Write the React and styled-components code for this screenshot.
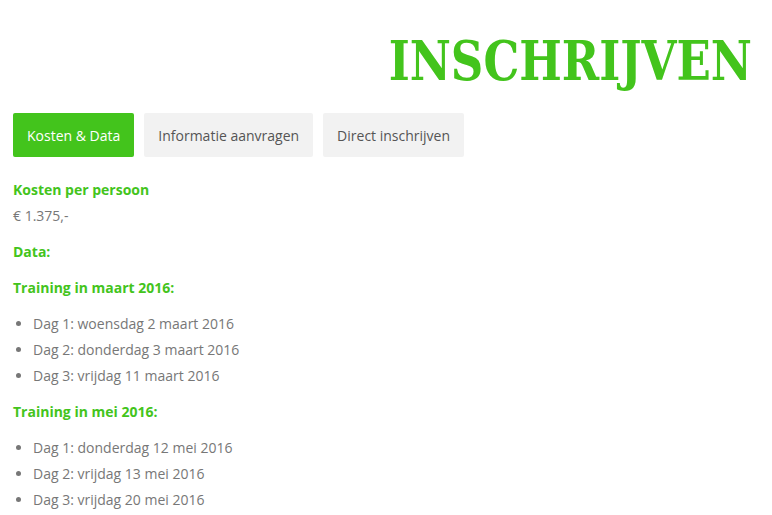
import React from 'react';
import styled, { createGlobalStyle } from 'styled-components';

const green = '#43c41c';

const GlobalStyle = createGlobalStyle`
  body {
    margin: 0;
    background: #fff;
    font-family: 'Open Sans', 'Liberation Sans', sans-serif;
  }
`;

const Page = styled('div')`
  padding: 0 20px 0 13px;
`;

const Title = styled('h1')`
  margin: 0;
  padding-top: 31px;
  text-align: right;
  font-family: 'DejaVu Serif', serif;
  font-stretch: condensed;
  font-weight: 700;
  font-size: 55px;
  line-height: 60px;
  color: ${green};
  transform: scaleX(0.91);
  transform-origin: right center;
`;

const Tabs = styled('div')`
  display: flex;
  gap: 10px;
  margin-top: 22px;
`;

const Tab = styled('button')`
  height: 44px;
  padding: 0 14px;
  border: none;
  border-radius: 2px;
  font-family: 'Open Sans', sans-serif;
  font-size: 14px;
  color: ${({ $active }) => ($active ? '#fff' : '#555')};
  background: ${({ $active }) => ($active ? green : '#f2f2f2')};
  cursor: pointer;
`;

const Content = styled('div')`
  margin-top: 20px;
  font-size: 14px;
  line-height: 26px;
  color: #777;
`;

const Para = styled('p')`
  margin: 0 0 10px;
`;

const Strong = styled('strong')`
  color: ${green};
  font-weight: 700;
`;

const List = styled('ul')`
  margin: 0 0 10px;
  padding-left: 20px;
`;

const trainings = [
  {
    title: 'Training in maart 2016:',
    days: ['Dag 1: woensdag 2 maart 2016', 'Dag 2: donderdag 3 maart 2016', 'Dag 3: vrijdag 11 maart 2016'],
  },
  {
    title: 'Training in mei 2016:',
    days: ['Dag 1: donderdag 12 mei 2016', 'Dag 2: vrijdag 13 mei 2016', 'Dag 3: vrijdag 20 mei 2016'],
  },
];

const App = () => {
  return (
    <Page>
      <GlobalStyle />
      <Title>INSCHRIJVEN</Title>
      <Tabs>
        <Tab $active>Kosten &amp; Data</Tab>
        <Tab>Informatie aanvragen</Tab>
        <Tab>Direct inschrijven</Tab>
      </Tabs>
      <Content>
        <Para>
          <Strong>Kosten per persoon</Strong>
          <br />€ 1.375,-
        </Para>
        <Para>
          <Strong>Data:</Strong>
        </Para>
        {trainings.map((t) => (
          <React.Fragment key={t.title}>
            <Para>
              <Strong>{t.title}</Strong>
            </Para>
            <List>
              {t.days.map((d) => (
                <li key={d}>{d}</li>
              ))}
            </List>
          </React.Fragment>
        ))}
      </Content>
    </Page>
  );
};

export default App;
